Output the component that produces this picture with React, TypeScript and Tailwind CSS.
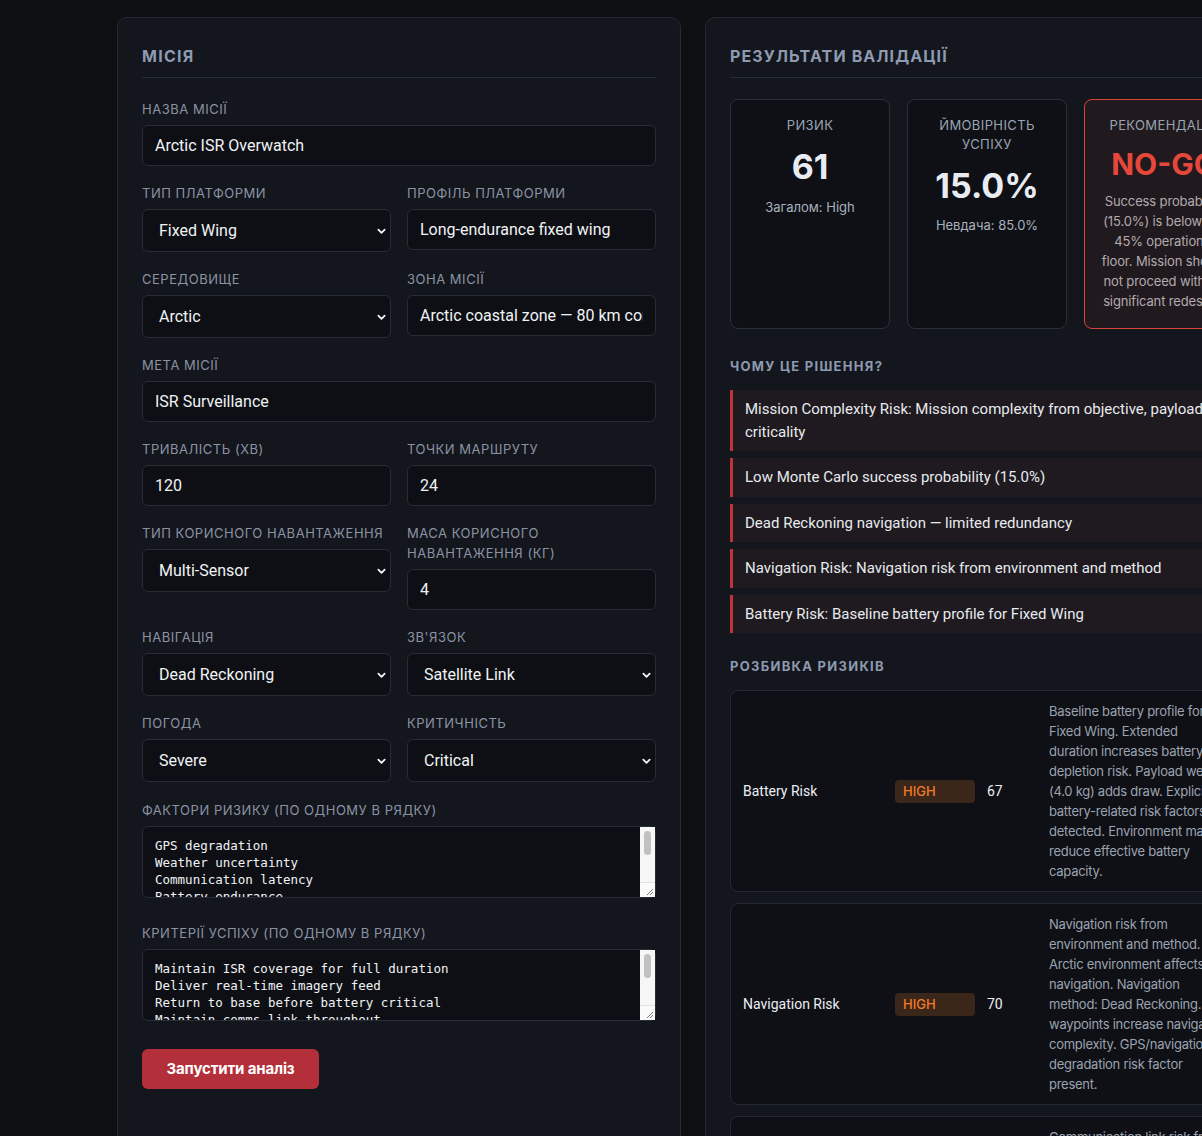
import React from "react";

const inputCls =
  "w-full h-[41px] rounded-md border border-[#262c38] bg-[#0d0f14] px-3 font-['Roboto',sans-serif] text-[16px] text-[#f1f3f5] outline-none";

function Field({ label, children }: { label: string; children: React.ReactNode }) {
  return (
    <div className="flex flex-col gap-[6px]">
      <span className="text-[13px] leading-[20px] uppercase tracking-[0.04em] text-[#8b93a3]">{label}</span>
      {children}
    </div>
  );
}

function Select({ value }: { value: string }) {
  return (
    <div className="relative">
      <select
        defaultValue={value}
        className="w-full h-[43px] appearance-none rounded-md border border-[#262c38] bg-[#0d0f14] pl-4 pr-8 font-['Roboto',sans-serif] text-[16px] text-[#f1f3f5] outline-none"
      >
        <option>{value}</option>
      </select>
      <svg
        className="pointer-events-none absolute right-[5px] top-1/2 -translate-y-1/2"
        width="9"
        height="9"
        viewBox="0 0 10 10"
        fill="none"
      >
        <path d="M1.5 3.5 L5 7 L8.5 3.5" stroke="#f1f3f5" strokeWidth="2" strokeLinecap="round" strokeLinejoin="round" />
      </svg>
    </div>
  );
}

// textarea with a light scrollbar strip + resize grip drawn over its right edge
function TextArea({ value }: { value: string }) {
  return (
    <div className="relative">
      <textarea
        defaultValue={value}
        className="block w-full h-[72px] resize-none overflow-hidden rounded-md border border-[#262c38] bg-[#0d0f14] pl-3 pr-6 pt-[10px] pb-2 font-['DejaVu_Sans_Mono',monospace] text-[12.5px] leading-[17px] text-[#f1f3f5] outline-none"
      />
      <div className="pointer-events-none absolute right-px top-px bottom-px flex w-[15px] flex-col bg-[#f6f6f6]">
        <div className="flex-1 px-[4px] pt-[4px]">
          <div className="h-[24px] rounded-full bg-[#c1c1c1]" />
        </div>
        <div className="relative h-[15px] border-t border-[#e2e2e2] bg-[#fafafa]">
          <svg className="absolute right-[1px] bottom-[1px]" width="9" height="9" viewBox="0 0 9 9">
            <path d="M8 2 L2 8 M8 5 L5 8" stroke="#777" strokeWidth="1" />
          </svg>
        </div>
      </div>
    </div>
  );
}

const reasons = [
  "Mission Complexity Risk: Mission complexity from objective, payload, and criticality",
  "Low Monte Carlo success probability (15.0%)",
  "Dead Reckoning navigation — limited redundancy",
  "Navigation Risk: Navigation risk from environment and method",
  "Battery Risk: Baseline battery profile for Fixed Wing",
];

const risks = [
  {
    name: "Battery Risk",
    level: "HIGH",
    score: 67,
    desc: "Baseline battery profile for Fixed Wing. Extended duration increases battery depletion risk. Payload weight (4.0 kg) adds draw. Explicit battery-related risk factors detected. Environment may reduce effective battery capacity.",
  },
  {
    name: "Navigation Risk",
    level: "HIGH",
    score: 70,
    desc: "Navigation risk from environment and method. Arctic environment affects navigation. Navigation method: Dead Reckoning. 24 waypoints increase navigation complexity. GPS/navigation degradation risk factor present.",
  },
  {
    name: "Communication Risk",
    level: "HIGH",
    score: 64,
    desc: "Communication link risk from environment and link type. Satellite Link latency in Arctic conditions. Communication latency risk factor present.",
  },
];

export default function App() {
  return (
    <div className="min-h-screen w-[1202px] overflow-hidden bg-[#0d0f13] font-['Inter',sans-serif]">
      <div className="grid w-max grid-cols-[564px_564px] gap-6 pl-[117px] pt-[17px]">
        {/* Mission form */}
        <section className="rounded-[10px] border border-[#232935] bg-[#13161d] px-6 pt-[26px] pb-10">
          <h2 className="border-b border-[#262c38] pb-[9px] text-[16px] leading-[24px] font-bold uppercase tracking-[0.08em] text-[#8e9ab0]">
            Місія
          </h2>

          <div className="mt-[21px] grid grid-cols-2 gap-x-4 gap-y-[17px]">
            <div className="col-span-2">
              <Field label="Назва місії">
                <input className={inputCls} defaultValue="Arctic ISR Overwatch" />
              </Field>
            </div>
            <Field label="Тип платформи">
              <Select value="Fixed Wing" />
            </Field>
            <Field label="Профіль платформи">
              <input className={inputCls} defaultValue="Long-endurance fixed wing" />
            </Field>
            <Field label="Середовище">
              <Select value="Arctic" />
            </Field>
            <Field label="Зона місії">
              <input className={inputCls} defaultValue="Arctic coastal zone — 80 km corridor" />
            </Field>
            <div className="col-span-2">
              <Field label="Мета місії">
                <input className={inputCls} defaultValue="ISR Surveillance" />
              </Field>
            </div>
            <Field label="Тривалість (хв)">
              <input className={inputCls} defaultValue="120" />
            </Field>
            <Field label="Точки маршруту">
              <input className={inputCls} defaultValue="24" />
            </Field>
            <Field label="Тип корисного навантаження">
              <Select value="Multi-Sensor" />
            </Field>
            <Field label="Маса корисного навантаження (кг)">
              <input className={inputCls} defaultValue="4" />
            </Field>
            <Field label="Навігація">
              <Select value="Dead Reckoning" />
            </Field>
            <Field label="Зв'язок">
              <Select value="Satellite Link" />
            </Field>
            <Field label="Погода">
              <Select value="Severe" />
            </Field>
            <Field label="Критичність">
              <Select value="Critical" />
            </Field>
            <div className="col-span-2 mt-[1px]">
              <Field label="Фактори ризику (по одному в рядку)">
                <TextArea value={"GPS degradation\nWeather uncertainty\nCommunication latency\nBattery endurance\nIcing conditions"} />
              </Field>
            </div>
            <div className="col-span-2 mt-[8px]">
              <Field label="Критерії успіху (по одному в рядку)">
                <TextArea
                  value={"Maintain ISR coverage for full duration\nDeliver real-time imagery feed\nReturn to base before battery critical\nMaintain comms link throughout\nNo loss of airframe"}
                />
              </Field>
            </div>
          </div>

          <button className="mt-[28px] h-10 w-[177px] rounded-md bg-[#b3303a] text-[15px] font-bold tracking-[-0.01em] text-white">
            Запустити аналіз
          </button>
        </section>

        {/* Validation results */}
        <section className="rounded-[10px] border border-[#232935] bg-[#13161d] px-6 pt-[26px] pb-10">
          <h2 className="border-b border-[#262c38] pb-[9px] text-[16px] leading-[24px] font-bold uppercase tracking-[0.07em] text-[#8e9ab0]">
            Результати валідації
          </h2>

          <div className="mt-[21px] grid grid-cols-3 gap-[17px]">
            <div className="h-[230px] rounded-lg border border-[#2a303b] bg-[#0e1016] px-3 pt-4 text-center">
              <div className="text-[13px] leading-[19px] uppercase tracking-[0.03em] text-[#9aa3b2]">Ризик</div>
              <div className="mt-3 text-[34px] leading-[40px] font-bold text-[#e8ecf2]">61</div>
              <div className="mt-[10px] text-[13px] leading-[20px] text-[#a9b0bb]">Загалом: High</div>
            </div>
            <div className="h-[230px] rounded-lg border border-[#2a303b] bg-[#0e1016] px-3 pt-4 text-center">
              <div className="text-[13px] leading-[19px] uppercase tracking-[0.03em] text-[#9aa3b2]">
                Ймовірність успіху
              </div>
              <div className="mt-3 text-[34px] leading-[40px] font-bold text-[#e8ecf2]">15.0%</div>
              <div className="mt-[9px] text-[13px] leading-[20px] text-[#a9b0bb]">Невдача: 85.0%</div>
            </div>
            <div className="h-[230px] rounded-lg border border-[#d9443a] bg-[#201a1e] px-[15px] pt-4 text-center">
              <div className="text-[13px] leading-[19px] uppercase tracking-[0.03em] text-[#9aa3b2]">Рекомендація</div>
              <div className="mt-[11px] text-[30px] leading-[36px] font-bold text-[#e5473b]">NO-GO</div>
              <div className="mt-[9px] text-[13px] leading-[20px] tracking-[-0.01em] text-[#b3aaae]">
                Success probability (15.0%) is below the 45% operational floor. Mission should not proceed without
                significant redesign.
              </div>
            </div>
          </div>

          <h3 className="mt-[27px] text-[13px] leading-[20px] font-bold uppercase tracking-[0.1em] text-[#8e9ab0]">
            Чому це рішення?
          </h3>
          <div className="mt-[14px] flex flex-col gap-[7px]">
            {reasons.map((r) => (
              <div
                key={r}
                className="border-l-[3px] border-[#c0323c] bg-[#1e1a20] py-2 pl-3 pr-1 font-['Roboto',sans-serif] text-[15px] leading-[1.5] text-[#e8eaee]"
              >
                {r}
              </div>
            ))}
          </div>

          <h3 className="mt-[23px] text-[13px] leading-[20px] font-bold uppercase tracking-[0.1em] text-[#8e9ab0]">
            Розбивка ризиків
          </h3>
          <div className="mt-[14px] flex flex-col gap-[11px]">
            {risks.map((risk) => (
              <div
                key={risk.name}
                className="grid grid-cols-[140px_80px_50px_1fr] items-center gap-3 rounded-lg border border-[#232935] bg-[#0e1016] py-[10px] pl-3 pr-[15px]"
              >
                <span className="font-['Roboto',sans-serif] text-[14px] text-[#eceef2]">{risk.name}</span>
                <span className="h-[23px] rounded bg-[#3a2719] px-2 text-[13px] leading-[23px] font-medium text-[#f47a2a]">
                  {risk.level}
                </span>
                <span className="font-['Roboto',sans-serif] text-[14px] text-[#eceef2]">{risk.score}</span>
                <p className="text-[13px] leading-[20px] tracking-[-0.02em] text-[#9ca3af]">{risk.desc}</p>
              </div>
            ))}
          </div>
        </section>
      </div>
    </div>
  );
}
